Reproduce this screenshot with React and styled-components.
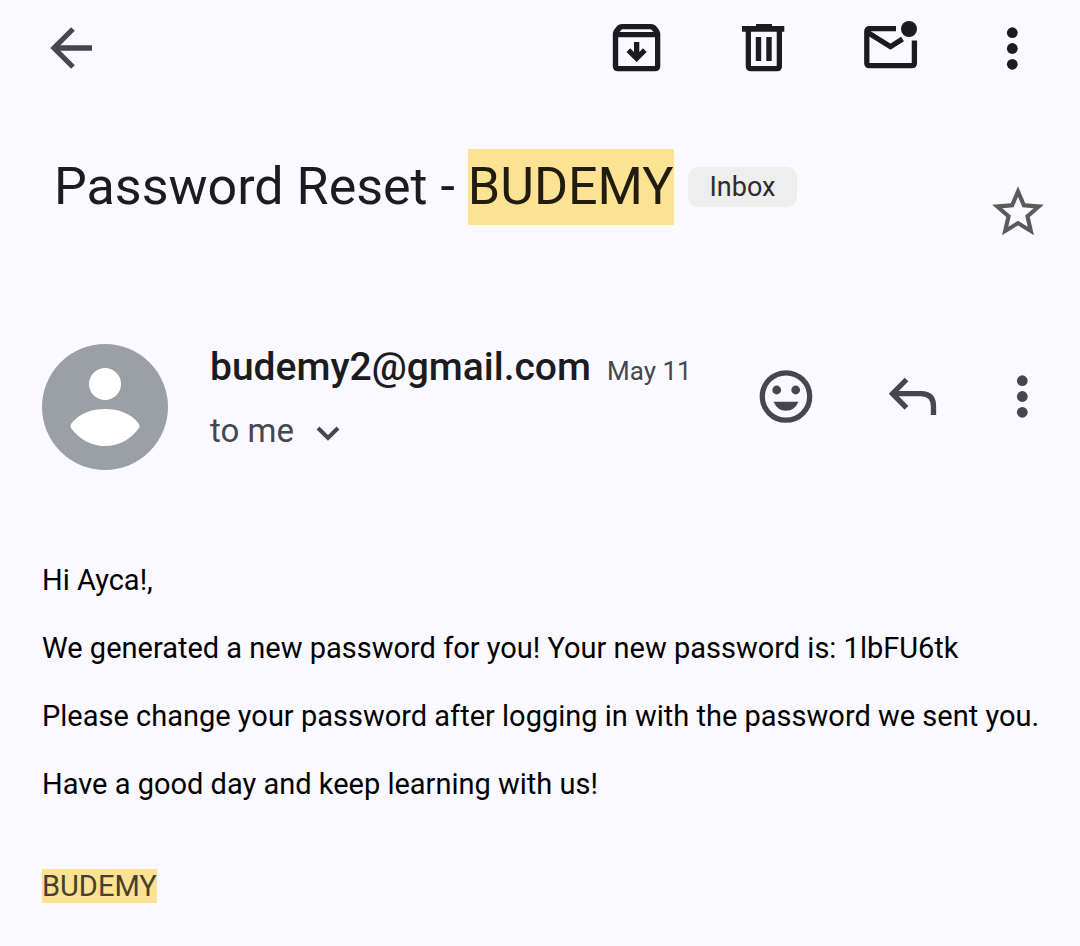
import React from "react";
import styled, { createGlobalStyle } from "styled-components";

const GlobalStyle = createGlobalStyle`
  *, *::before, *::after { box-sizing: border-box; }
  body {
    margin: 0;
    background: #faf9ff;
    color: #1b1b20;
    font-family: Roboto, "Liberation Sans", sans-serif;
  }
`;

const Page = styled.main`
  display: flex;
  flex-direction: column;
  min-height: 100vh;
`;

const Toolbar = styled.header`
  display: flex;
  justify-content: space-between;
  padding: 16px 39px;
`;

const Actions = styled.div`
  display: flex;
  flex-shrink: 0;
  gap: 62px;
`;

const IconButton = styled.button`
  display: flex;
  align-items: center;
  justify-content: center;
  flex-shrink: 0;
  width: ${(p) => p.$width || 64}px;
  height: 64px;
  padding: 0;
  border: 0;
  background: none;
  color: ${(p) => (p.$muted ? "#46464c" : "#1b1b20")};
  cursor: pointer;

  svg { display: block; flex-shrink: 0; }
`;

const SubjectRow = styled.section`
  display: flex;
  align-items: flex-start;
  justify-content: space-between;
  padding: 53px 30px 0 54px;
`;

const SubjectLine = styled.div`
  display: flex;
  align-items: center;
  gap: 14px;
`;

const Subject = styled.h1`
  margin: 0;
  font-size: 52px;
  line-height: 76px;
  font-weight: 400;
`;

const Highlight = styled.mark`
  display: inline-block;
  background: #fde293;
  color: ${(p) => (p.$soft ? "#45402f" : "#211c10")};
`;

const Label = styled.span`
  padding: 0 22px;
  border-radius: 10px;
  background: #eeeeee;
  color: #2c2c30;
  font-size: 27px;
  line-height: 40px;
`;

const StarButton = styled(IconButton)`
  margin-top: 31px;
  color: #5c5b5b;
`;

const MessageHeader = styled.section`
  display: flex;
  align-items: flex-start;
  gap: 42px;
  padding: 100px 42px 0;
`;

const Avatar = styled.svg`
  display: block;
  flex-shrink: 0;
  width: 126px;
  height: 126px;
`;

const Sender = styled.div`
  flex: 1;
  min-width: 0;
`;

const SenderLine = styled.div`
  display: flex;
  align-items: baseline;
  gap: 16px;
  line-height: 46px;
  white-space: nowrap;
`;

const Address = styled.span`
  font-size: 39px;
  font-weight: 500;
`;

const DateText = styled.time`
  color: #46464c;
  font-size: 26px;
`;

const Recipients = styled.button`
  display: flex;
  align-items: center;
  gap: 22px;
  margin-top: 14px;
  padding: 0;
  border: 0;
  background: none;
  color: #46464c;
  font: inherit;
  font-size: 33px;
  line-height: 46px;
  cursor: pointer;
`;

const MessageActions = styled(Actions)`
  margin-top: 20px;
`;

const Body = styled.article`
  padding: 93px 32px 42px 42px;
  color: #000;
  font-size: 29px;
  line-height: 34px;
`;

const Paragraph = styled.p`
  margin: 0 0 34px;
`;

const Signature = styled.p`
  margin: 68px 0 0;
`;

const Icon = ({ children, width = 64 }) => (
  <svg width={width} height="64" viewBox={`0 0 ${width} 64`} fill="currentColor" aria-hidden="true">
    {children}
  </svg>
);

const BackIcon = () => (
  <Icon>
    <path d="M34 13L15 32L34 51M15 32H53" fill="none" stroke="currentColor" strokeWidth="5.3" />
  </Icon>
);

const ArchiveIcon = () => (
  <Icon>
    <path
      fillRule="evenodd"
      d="M17 8H46Q49 8 51 10L54 14Q55.300 16 55.300 18V50Q55.300 55.300 50 55.300H13Q7.800 55.300 7.800 50V18Q7.800 16 9 14L12 10Q14 8 17 8ZM14.500 16H48.500L46 13.300H17ZM13.200 21.300V50H50V21.300Z"
    />
    <path d="M29 26H34.300V36L38 32.300L41.700 36L31.600 46L21.500 36L25.200 32.300L29 36Z" />
  </Icon>
);

const TrashIcon = () => (
  <Icon>
    <path
      fillRule="evenodd"
      d="M25 8H41V10H53.300V15.700H51V50Q51 55.300 46 55.300H20Q14.700 55.300 14.700 50V15.700H11V10H25ZM20 15.700V50H45.700V15.700Z"
    />
    <path d="M24.800 21H30.200V45H24.800ZM35.300 21H40.700V45H35.300Z" />
  </Icon>
);

const UnreadIcon = () => (
  <Icon>
    <path d="M39 12.700H12.500Q9.800 12.700 9.800 15.400V47Q9.800 49.700 12.500 49.700H54.700Q57.400 49.700 57.400 47V24.500" fill="none" stroke="currentColor" strokeWidth="5.3" />
    <path d="M10 16L33.500 30.700L45.500 23" fill="none" stroke="currentColor" strokeWidth="5.3" />
    <circle cx="52" cy="13" r="8" />
  </Icon>
);

const MoreIcon = () => (
  <Icon width={32}>
    <circle cx="16.300" cy="16.700" r="5.400" />
    <circle cx="16.300" cy="32.500" r="5.400" />
    <circle cx="16.300" cy="48.300" r="5.400" />
  </Icon>
);

const StarIcon = () => (
  <svg width="62" height="62" viewBox="0 0 24 24" fill="currentColor" aria-hidden="true">
    <path d="M22 9.240l-7.190-.62L12 2 9.190 8.630 2 9.240l5.460 4.730L5.820 21 12 17.270 18.180 21l-1.630-7.030L22 9.240zM12 15.400l-3.760 2.270 1-4.280-3.320-2.880 4.380-.38L12 6.100l1.710 4.040 4.380.38-3.320 2.880 1 4.280L12 15.400z" />
  </svg>
);

const SmileIcon = () => (
  <Icon>
    <circle cx="32" cy="32.500" r="23.700" fill="none" stroke="currentColor" strokeWidth="5.3" />
    <circle cx="22.700" cy="26" r="4.400" />
    <circle cx="41.700" cy="26" r="4.400" />
    <path d="M19.500 37.700H44.500Q40.500 46.700 32 46.700T19.500 37.700Z" />
  </Icon>
);

const ReplyIcon = () => (
  <Icon>
    <path d="M26.500 15.500L12.500 29.700L26.500 43.900M12.500 29.700H41Q53.500 29.700 53.500 42.500V51" fill="none" stroke="currentColor" strokeWidth="5.3" />
  </Icon>
);

const ChevronIcon = () => (
  <svg width="24" height="24" viewBox="0 0 24 24" fill="none" stroke="currentColor" strokeWidth="4" aria-hidden="true">
    <path d="M2 9L12 19L22 9" />
  </svg>
);

export default function App() {
  return (
    <>
      <GlobalStyle />
      <Page>
        <Toolbar>
          <IconButton $muted aria-label="Back"><BackIcon /></IconButton>
          <Actions>
            <IconButton aria-label="Archive"><ArchiveIcon /></IconButton>
            <IconButton aria-label="Delete"><TrashIcon /></IconButton>
            <IconButton aria-label="Mark as unread"><UnreadIcon /></IconButton>
            <IconButton $width={58} aria-label="More options"><MoreIcon /></IconButton>
          </Actions>
        </Toolbar>

        <SubjectRow>
          <SubjectLine>
            <Subject>Password Reset - <Highlight>BUDEMY</Highlight></Subject>
            <Label>Inbox</Label>
          </SubjectLine>
          <StarButton aria-label="Star"><StarIcon /></StarButton>
        </SubjectRow>

        <MessageHeader>
          <Avatar viewBox="0 0 126 126" role="img" aria-label="Sender">
            <circle cx="63" cy="63" r="63" fill="#9aa0a6" />
            <circle cx="63" cy="40" r="16" fill="#fff" />
            <path d="M29 80C37 69 50 65 63 65S89 69 97 80Q98 82 97 84C89 95 77 102 63 102S37 95 29 84Q28 82 29 80Z" fill="#fff" />
          </Avatar>
          <Sender>
            <SenderLine>
              <Address>budemy2@gmail.com</Address>
              <DateText>May 11</DateText>
            </SenderLine>
            <Recipients>to me <ChevronIcon /></Recipients>
          </Sender>
          <MessageActions>
            <IconButton $muted aria-label="Add reaction"><SmileIcon /></IconButton>
            <IconButton $muted aria-label="Reply"><ReplyIcon /></IconButton>
            <IconButton $muted $width={32} aria-label="More message options"><MoreIcon /></IconButton>
          </MessageActions>
        </MessageHeader>

        <Body>
          <Paragraph>Hi Ayca!,</Paragraph>
          <Paragraph>We generated a new password for you! Your new password is: 1lbFU6tk</Paragraph>
          <Paragraph>Please change your password after logging in with the password we sent you.</Paragraph>
          <Paragraph>Have a good day and keep learning with us!</Paragraph>
          <Signature><Highlight $soft>BUDEMY</Highlight></Signature>
        </Body>
      </Page>
    </>
  );
}
